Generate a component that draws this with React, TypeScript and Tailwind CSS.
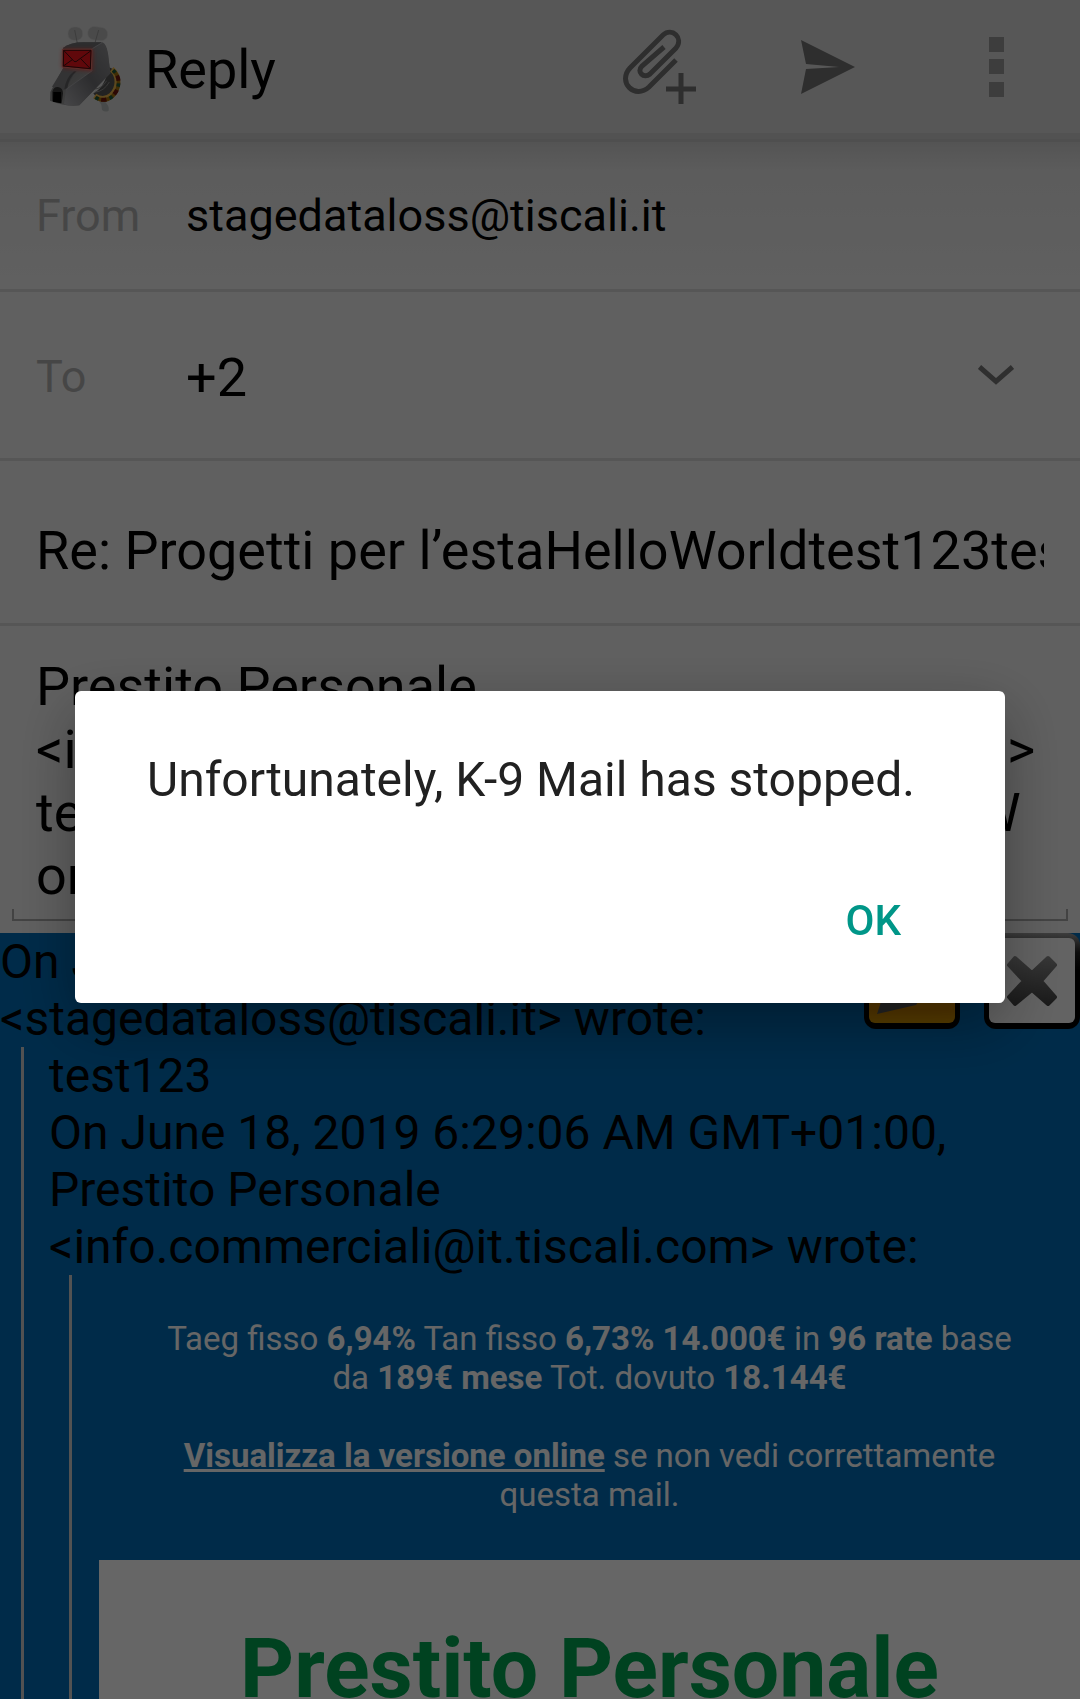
import React from "react";

function DogLogo() {
  return (
    <svg viewBox="0 0 300 330" className="h-[110px] w-[100px] shrink-0" aria-hidden="true">
      <defs>
        <linearGradient id="face" x1="0" y1="0" x2="1" y2="1">
          <stop offset="0" stopColor="#6a6a6a" />
          <stop offset="0.6" stopColor="#9a9a9a" />
          <stop offset="1" stopColor="#777" />
        </linearGradient>
        <linearGradient id="side" x1="1" y1="0" x2="0" y2="1">
          <stop offset="0" stopColor="#959598" />
          <stop offset="0.5" stopColor="#707074" />
          <stop offset="1" stopColor="#b0b0b4" />
        </linearGradient>
        <filter id="glow" x="-30%" y="-30%" width="160%" height="160%">
          <feGaussianBlur stdDeviation="6" />
        </filter>
      </defs>
      <rect x="114" y="45" width="44" height="40" rx="18" fill="#b8b8b8" stroke="#d0d0d0" strokeWidth="2" />
      <rect x="173" y="45" width="60" height="40" rx="19" fill="#b8b8b8" stroke="#d0d0d0" strokeWidth="2" transform="rotate(8 203 65)" />
      <path d="M134 54 L142 94 M206 54 L194 96" stroke="#989898" strokeWidth="3" fill="none" />
      <path d="M203 262 L222 266 Q240 282 236 296 Q226 302 216 294 L214 278Z" fill="#b4bab8" />
      <path d="M190 244 Q226 226 236 165 L250 172 Q268 210 248 240 Q228 262 196 252Z" fill="#555" />
      <path d="M245 172 C270 192 266 230 244 250 C230 262 212 264 194 252" fill="none" stroke="#e8b44c" strokeWidth="17" />
      <path d="M249 175 C274 196 269 232 247 253 C232 266 213 267 196 256" fill="none" stroke="#a0700c" strokeWidth="11" />
      <path d="M249 175 C274 196 269 232 247 253 C232 266 213 267 196 256" fill="none" stroke="#1d5a3c" strokeWidth="11" strokeDasharray="10 34" />
      <path d="M249 175 C274 196 269 232 247 253 C232 266 213 267 196 256" fill="none" stroke="#6e140c" strokeWidth="12" strokeDasharray="16 28" strokeDashoffset="-20" />
      <path d="M194 231 Q216 230 230 206 M196 240 Q222 238 238 210" stroke="#8c8c8c" strokeWidth="3" fill="none" />
      <path d="M99 108 Q120 91 160 91 L212 91 Q225 92 234 125 L241 184 L148 280 Q110 286 60 266 L61 240 L99 169Z" fill="url(#face)" />
      <path d="M187 112 L218 91 Q230 97 234 125 L241 184 L148 280 Q120 284 102 277 L108 231 L187 176Z" fill="url(#side)" />
      <path d="M99 108 Q120 91 160 91 L216 91 L187 109Z" fill="#707073" />
      <path d="M187 110 L218 91 M108 232 L187 176" stroke="#b4b4b8" strokeWidth="2" fill="none" />
      <path d="M66 224 L100 169 L136 178 L108 232 L100 235Z" fill="#808083" />
      <path d="M132 178 Q108 196 103 232 L112 228 Q116 198 140 178Z" fill="#606063" />
      <path d="M67 239 Q70 224 84 225 Q99 228 99 244 L95 274 L67 268Z" fill="#383838" />
      <path d="M70 240 L93 240 L93 274 L69 269Z" fill="#000" />
      <path d="M98 112 H188 V176 L96 168Z" fill="#ff332c" opacity=".8" filter="url(#glow)" />
      <path d="M98 112 H186 L184 174 L97 165Z" fill="#f0141c" stroke="#df776e" strokeWidth="3" />
      <path d="M101 115 H183 L181 170 L100 162Z M101 115 L132 148 L138 149 L183 116 M100 162 L127 143 M181 170 L152 140" fill="none" stroke="#411" strokeWidth="3" />
    </svg>
  );
}

const iconButton = "flex shrink-0 items-center justify-center";

function Toolbar() {
  return (
    <header className="border-b-[3px] border-[#c6c6c6] bg-[#dadada]">
      <div className="flex h-[139px] items-center border-b-[6px] border-[#cecece] pl-[30px]">
        <DogLogo />
        <h1 className="ml-[15px] flex-1 pt-1.5 text-[54px] leading-[64px] font-normal text-black">Reply</h1>
        <button type="button" aria-label="Add attachment" className={`${iconButton} h-[133px] w-[168px]`}>
          <svg viewBox="0 0 78 80" className="h-[80px] w-[78px]" fill="none" stroke="#737373" strokeWidth="5">
            <path d="M55 33 L28 60 C14 73 -4 55 9 41 L42 8 C51 0 63 11 55 21 L29 47 C23 52 15 45 21 39 L43 20" />
            <path d="M60 46 V77 M45 62 H75" />
          </svg>
        </button>
        <button type="button" aria-label="Send" className={`${iconButton} h-[133px] w-[168px]`}>
          <svg viewBox="0 0 54 54" className="h-[54px] w-[54px]" fill="#737373">
            <path d="M0 0 L54 27 L0 54 L5 29 L38 27 L5 24Z" />
          </svg>
        </button>
        <button type="button" aria-label="More options" className={`${iconButton} h-[133px] w-[168px]`}>
          <svg viewBox="0 0 15 60" className="h-[60px] w-[15px]" fill="#989898">
            <path d="M0 0H15V15H0Z M0 22H15V37H0Z M0 45H15V60H0Z" />
          </svg>
        </button>
      </div>
    </header>
  );
}

function Compose() {
  return (
    <form className="bg-[#f0f0f0]">
      <div className="flex h-[150px] items-center border-b-[3px] border-[#d8d8d8] bg-linear-to-b from-[#d2d2d2] via-[#e6e6e6] via-20% to-[#f0f0f0] px-9 text-[45px] leading-[54px]">
        <label htmlFor="from" className="w-[150px] text-[#b0b0b0]">From</label>
        <input id="from" readOnly defaultValue="stagedataloss@tiscali.it" className="min-w-0 flex-1 text-black outline-none" />
      </div>
      <div className="flex h-[169px] items-center border-b-[3px] border-[#d8d8d8] px-9">
        <label htmlFor="to" className="w-[150px] pt-1 text-[45px] leading-[54px] text-[#b0b0b0]">To</label>
        <input id="to" readOnly defaultValue="+2" className="min-w-0 flex-1 pt-1.5 text-[54px] leading-[64px] text-black outline-none" />
        <button type="button" aria-label="Show Cc and Bcc" className={`${iconButton} h-24 w-24`}>
          <svg viewBox="0 0 36 20" className="h-5 w-9" fill="none" stroke="#767676" strokeWidth="5">
            <path d="M1.500 2 L18 16.500 L34.500 2" />
          </svg>
        </button>
      </div>
      <div className="flex h-[165px] items-center border-b-[3px] border-[#d8d8d8] px-9 pt-[18px]">
        <input aria-label="Subject" readOnly defaultValue="Re: Progetti per l’estaHelloWorldtest123test123" className="w-full text-[54px] leading-[64px] text-black outline-none" />
      </div>
      <div className="px-3 pt-[29px] pb-3">
        <textarea
          aria-label="Message text"
          readOnly
          rows={4}
          wrap="off"
          className="block w-full resize-none overflow-hidden px-6 text-[54px] leading-[63px] text-black outline-none"
          defaultValue={"Prestito Personale\n<info.commercialitest123@it.tiscali.com>\ntest123test123HelloWorldtest123HelloW\norld"}
        />
        <div className="mt-0.5 h-3 border-x-2 border-b-2 border-[#a8a8a8]" />
      </div>
    </form>
  );
}

function QuoteActions() {
  return (
    <div className="absolute top-0 right-0 flex gap-6">
      <button type="button" aria-label="Edit quoted text">
        <svg viewBox="0 0 96 96" className="size-24">
          <defs>
            <linearGradient id="amber" x1="0" y1="0" x2="0" y2="1">
              <stop offset="0" stopColor="#ffc24a" />
              <stop offset="0.85" stopColor="#d48800" />
              <stop offset="1" stopColor="#dc9c00" />
            </linearGradient>
          </defs>
          <rect width="96" height="96" rx="12" fill="#000" />
          <rect x="5" y="5" width="86" height="85" rx="6" fill="url(#amber)" />
          <path d="M13 81 L22 54 L62 14 L80 32 L52 72Z" fill="#5a5a5a" />
          <path d="M25 70 L31 60 L44 67Z" fill="#d48800" />
        </svg>
      </button>
      <button type="button" aria-label="Remove quoted text">
        <svg viewBox="0 0 96 96" className="size-24">
          <defs>
            <linearGradient id="frame" x1="0" y1="0" x2="0" y2="1">
              <stop offset="0" stopColor="#999" />
              <stop offset="0.2" stopColor="#222" />
              <stop offset="0.4" stopColor="#000" />
            </linearGradient>
            <linearGradient id="cross" x1="0" y1="0" x2="0" y2="1">
              <stop offset="0" stopColor="#888" />
              <stop offset="1" stopColor="#444" />
            </linearGradient>
          </defs>
          <rect width="96" height="96" rx="12" fill="url(#frame)" />
          <rect x="5" y="5" width="86" height="85" rx="6" fill="#f8f8f8" />
          <path d="M31 25 L48 40 L64 25 L71 32 L57 48 L71 64 L64 71 L48 57 L31 71 L25 64 L40 48 L25 32Z" fill="url(#cross)" stroke="url(#cross)" strokeWidth="4" strokeLinejoin="round" />
        </svg>
      </button>
    </div>
  );
}

function QuotedMessage() {
  return (
    <section className="relative flex-1 bg-[#006cb6] text-[48px] leading-[57px] text-black">
      <p className="whitespace-nowrap">
        On June 18, 2019
        <br />
        &lt;stagedataloss@tiscali.it&gt; wrote:
      </p>
      <blockquote className="ml-[21px] border-l-[3px] border-[#ccc] pl-[25px]">
        <p>
          test123
          <br />
          On June 18, 2019 6:29:06 AM GMT+01:00,
          <br />
          Prestito Personale
          <br />
          &lt;info.commerciali@it.tiscali.com&gt; wrote:
        </p>
        <blockquote className="ml-5 border-l-[3px] border-[#ccc] pl-[27px]">
          <div className="px-12 pt-[44px] pb-[46px] text-center text-[33px] leading-[39px] text-white">
            <p>
              Taeg fisso <b>6,94%</b> Tan fisso <b>6,73%</b> <b>14.000€</b> in <b>96 rate</b> base da{" "}
              <b>189€ mese</b> Tot. dovuto <b>18.144€</b>
            </p>
            <p className="mt-[39px]">
              <a href="#online" className="font-bold underline">Visualizza la versione online</a> se non vedi
              correttamente questa mail.
            </p>
          </div>
          <h2 className="bg-white px-6 pt-[61px] pb-16 text-center text-[84px] leading-[96px] font-bold text-[#00a551]">
            Prestito Personale
          </h2>
        </blockquote>
      </blockquote>
      <QuoteActions />
    </section>
  );
}

function CrashDialog() {
  return (
    <div className="fixed inset-0 flex items-center justify-center bg-black/60 px-[75px] pb-1.5">
      <div
        role="alertdialog"
        aria-modal="true"
        aria-labelledby="crash-message"
        className="w-full rounded-md bg-white px-[72px] pt-[60px] pb-[34px] shadow-[0_20px_60px_rgba(0,0,0,0.35)]"
      >
        <p id="crash-message" className="text-[48px] leading-[57px] text-[#212121]">
          Unfortunately, K-9 Mail has stopped.
        </p>
        <div className="mt-[65px] flex justify-end">
          <button type="button" className="h-24 px-8 text-[42px] leading-[48px] font-medium text-[#009688]">OK</button>
        </div>
      </div>
    </div>
  );
}

export default function App() {
  return (
    <main className="flex h-screen flex-col overflow-hidden bg-[#f0f0f0] font-[Roboto,sans-serif]">
      <Toolbar />
      <Compose />
      <QuotedMessage />
      <CrashDialog />
    </main>
  );
}
